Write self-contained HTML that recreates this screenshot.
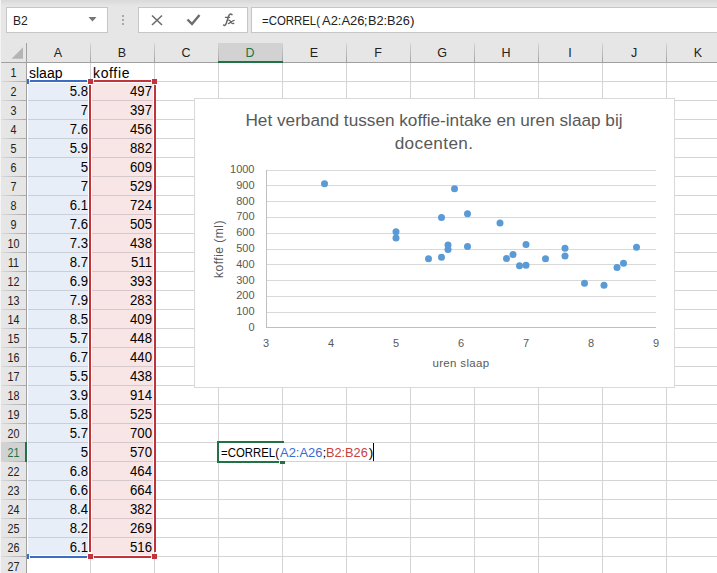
<!DOCTYPE html><html><head><meta charset="utf-8"><style>
*{margin:0;padding:0;box-sizing:border-box}
html,body{width:717px;height:573px;overflow:hidden;background:#e6e6e6;font-family:"Liberation Sans", sans-serif;position:relative}
.a{position:absolute}
.t{position:absolute;white-space:nowrap;line-height:1}
</style></head><body>

<div class="a" style="left:0;top:0;width:717px;height:6px;background:linear-gradient(#d9d9d9,#e6e6e6)"></div>
<div class="a" style="left:0;top:0;width:1px;height:573px;background:#f4f4f4"></div>
<div class="a" style="left:6px;top:7px;width:102px;height:26px;background:#fff;border:1px solid #c6c6c6"></div>
<div class="t" style="left:12.8px;top:14px;font-size:13px;color:#222;transform:scaleX(0.93);transform-origin:0 0">B2</div>
<svg class="a" style="left:0;top:0" width="717" height="43"><polygon points="88.5,17 96.5,17 92.5,21.5" fill="#757575"/><rect x="122" y="15" width="2" height="2" fill="#a8a8a8"/><rect x="122" y="19" width="2" height="2" fill="#a8a8a8"/><rect x="122" y="23" width="2" height="2" fill="#a8a8a8"/></svg>
<div class="a" style="left:138px;top:7px;width:110px;height:26px;background:#fff;border:1px solid #c6c6c6"></div>
<svg class="a" style="left:0;top:0" width="717" height="43"><path d="M152,15.5 L162,25 M162,15.5 L152,25" stroke="#6d6d6d" stroke-width="1.6" fill="none"/><path d="M187.5,19.5 L192,24 L199.5,15" stroke="#6d6d6d" stroke-width="2.4" fill="none"/></svg>
<svg class="a" style="left:215px;top:8px" width="30" height="24"><g fill="none" stroke="#666" stroke-linecap="round"><path d="M17,6.6 C15.6,5.6 14.2,6.2 13.6,8.2 L11.2,15.6 C10.6,17.4 9.4,17.8 8.6,17" stroke-width="1.5"/><path d="M10.4,9.4 L14.6,9.4" stroke-width="1.2"/><path d="M13.6,12.2 C15,11.8 16.2,14.6 17,15.4 C17.6,15.9 18.3,15.6 18.8,15.2 M19.2,12.3 C18,12 15,15.2 13.4,15.6" stroke-width="1.2"/></g></svg>
<div class="a" style="left:251px;top:7px;width:480px;height:26px;background:#fff;border:1px solid #c6c6c6"></div>
<div class="t" style="left:262.16px;top:14px;font-size:13.6px;color:#222;transform:scaleX(0.8382);transform-origin:0 0">=CORREL(</div>
<div class="t" style="left:321.70px;top:14px;font-size:13.6px;color:#222;transform:scaleX(0.9523);transform-origin:0 0">A2:A26</div>
<div class="t" style="left:363.80px;top:14px;font-size:13.6px;color:#222;transform:scaleX(1.0000);transform-origin:0 0">;</div>
<div class="t" style="left:367.66px;top:14px;font-size:13.6px;color:#222;transform:scaleX(0.9372);transform-origin:0 0">B2:B26</div>
<div class="t" style="left:410.00px;top:14px;font-size:13.6px;color:#222;transform:scaleX(1.0000);transform-origin:0 0">)</div>
<div class="a" style="left:1px;top:43px;width:716px;height:20px;background:#e6e6e6"></div>
<svg class="a" style="left:0;top:43px" width="26" height="19"><polygon points="11.5,15.7 23,15.7 23,4.2" fill="#b4b4b4"/></svg>
<div class="a" style="left:218px;top:43px;width:65px;height:19px;background:#d2d2d2"></div>
<div class="a" style="left:27px;top:63px;width:690px;height:510px;background:#fff"></div>
<div class="a" style="left:1px;top:63px;width:25px;height:510px;background:#e6e6e6"></div>
<div class="a" style="left:1px;top:442px;width:25px;height:19px;background:#d2d2d2"></div>
<div class="a" style="left:1px;top:62px;width:716px;height:1px;background:#a0a0a0"></div>
<div class="a" style="left:26px;top:43px;width:1px;height:530px;background:#a0a0a0"></div>
<div class="a" style="left:90px;top:43px;width:1px;height:19px;background:linear-gradient(#d4d4d4,#a4a4a4)"></div>
<div class="a" style="left:90px;top:63px;width:1px;height:510px;background:#d4d4d4"></div>
<div class="t" style="left:26px;top:47px;width:64px;text-align:center;font-size:12.5px;color:#222">A</div>
<div class="a" style="left:154px;top:43px;width:1px;height:19px;background:linear-gradient(#d4d4d4,#a4a4a4)"></div>
<div class="a" style="left:154px;top:63px;width:1px;height:510px;background:#d4d4d4"></div>
<div class="t" style="left:90px;top:47px;width:64px;text-align:center;font-size:12.5px;color:#222">B</div>
<div class="a" style="left:218px;top:43px;width:1px;height:19px;background:linear-gradient(#d4d4d4,#a4a4a4)"></div>
<div class="a" style="left:218px;top:63px;width:1px;height:510px;background:#d4d4d4"></div>
<div class="t" style="left:154px;top:47px;width:64px;text-align:center;font-size:12.5px;color:#222">C</div>
<div class="a" style="left:282px;top:43px;width:1px;height:19px;background:linear-gradient(#d4d4d4,#a4a4a4)"></div>
<div class="a" style="left:282px;top:63px;width:1px;height:510px;background:#d4d4d4"></div>
<div class="t" style="left:218px;top:47px;width:64px;text-align:center;font-size:12.5px;color:#217346">D</div>
<div class="a" style="left:346px;top:43px;width:1px;height:19px;background:linear-gradient(#d4d4d4,#a4a4a4)"></div>
<div class="a" style="left:346px;top:63px;width:1px;height:510px;background:#d4d4d4"></div>
<div class="t" style="left:282px;top:47px;width:64px;text-align:center;font-size:12.5px;color:#222">E</div>
<div class="a" style="left:410px;top:43px;width:1px;height:19px;background:linear-gradient(#d4d4d4,#a4a4a4)"></div>
<div class="a" style="left:410px;top:63px;width:1px;height:510px;background:#d4d4d4"></div>
<div class="t" style="left:346px;top:47px;width:64px;text-align:center;font-size:12.5px;color:#222">F</div>
<div class="a" style="left:474px;top:43px;width:1px;height:19px;background:linear-gradient(#d4d4d4,#a4a4a4)"></div>
<div class="a" style="left:474px;top:63px;width:1px;height:510px;background:#d4d4d4"></div>
<div class="t" style="left:410px;top:47px;width:64px;text-align:center;font-size:12.5px;color:#222">G</div>
<div class="a" style="left:538px;top:43px;width:1px;height:19px;background:linear-gradient(#d4d4d4,#a4a4a4)"></div>
<div class="a" style="left:538px;top:63px;width:1px;height:510px;background:#d4d4d4"></div>
<div class="t" style="left:474px;top:47px;width:64px;text-align:center;font-size:12.5px;color:#222">H</div>
<div class="a" style="left:602px;top:43px;width:1px;height:19px;background:linear-gradient(#d4d4d4,#a4a4a4)"></div>
<div class="a" style="left:602px;top:63px;width:1px;height:510px;background:#d4d4d4"></div>
<div class="t" style="left:538px;top:47px;width:64px;text-align:center;font-size:12.5px;color:#222">I</div>
<div class="a" style="left:666px;top:43px;width:1px;height:19px;background:linear-gradient(#d4d4d4,#a4a4a4)"></div>
<div class="a" style="left:666px;top:63px;width:1px;height:510px;background:#d4d4d4"></div>
<div class="t" style="left:602px;top:47px;width:64px;text-align:center;font-size:12.5px;color:#222">J</div>
<div class="a" style="left:730px;top:43px;width:1px;height:19px;background:linear-gradient(#d4d4d4,#a4a4a4)"></div>
<div class="a" style="left:730px;top:63px;width:1px;height:510px;background:#d4d4d4"></div>
<div class="t" style="left:666px;top:47px;width:64px;text-align:center;font-size:12.5px;color:#222">K</div>
<div class="a" style="left:1px;top:81px;width:25px;height:1px;background:linear-gradient(to right,#dadada,#a8a8a8)"></div>
<div class="a" style="left:27px;top:81px;width:690px;height:1px;background:#d4d4d4"></div>
<div class="t" style="left:1px;top:67px;width:25px;text-align:center;font-size:12.5px;color:#222;transform:scaleX(0.86)">1</div>
<div class="a" style="left:1px;top:100px;width:25px;height:1px;background:linear-gradient(to right,#dadada,#a8a8a8)"></div>
<div class="a" style="left:27px;top:100px;width:690px;height:1px;background:#d4d4d4"></div>
<div class="t" style="left:1px;top:86px;width:25px;text-align:center;font-size:12.5px;color:#222;transform:scaleX(0.86)">2</div>
<div class="a" style="left:1px;top:119px;width:25px;height:1px;background:linear-gradient(to right,#dadada,#a8a8a8)"></div>
<div class="a" style="left:27px;top:119px;width:690px;height:1px;background:#d4d4d4"></div>
<div class="t" style="left:1px;top:105px;width:25px;text-align:center;font-size:12.5px;color:#222;transform:scaleX(0.86)">3</div>
<div class="a" style="left:1px;top:138px;width:25px;height:1px;background:linear-gradient(to right,#dadada,#a8a8a8)"></div>
<div class="a" style="left:27px;top:138px;width:690px;height:1px;background:#d4d4d4"></div>
<div class="t" style="left:1px;top:124px;width:25px;text-align:center;font-size:12.5px;color:#222;transform:scaleX(0.86)">4</div>
<div class="a" style="left:1px;top:157px;width:25px;height:1px;background:linear-gradient(to right,#dadada,#a8a8a8)"></div>
<div class="a" style="left:27px;top:157px;width:690px;height:1px;background:#d4d4d4"></div>
<div class="t" style="left:1px;top:143px;width:25px;text-align:center;font-size:12.5px;color:#222;transform:scaleX(0.86)">5</div>
<div class="a" style="left:1px;top:176px;width:25px;height:1px;background:linear-gradient(to right,#dadada,#a8a8a8)"></div>
<div class="a" style="left:27px;top:176px;width:690px;height:1px;background:#d4d4d4"></div>
<div class="t" style="left:1px;top:162px;width:25px;text-align:center;font-size:12.5px;color:#222;transform:scaleX(0.86)">6</div>
<div class="a" style="left:1px;top:195px;width:25px;height:1px;background:linear-gradient(to right,#dadada,#a8a8a8)"></div>
<div class="a" style="left:27px;top:195px;width:690px;height:1px;background:#d4d4d4"></div>
<div class="t" style="left:1px;top:181px;width:25px;text-align:center;font-size:12.5px;color:#222;transform:scaleX(0.86)">7</div>
<div class="a" style="left:1px;top:214px;width:25px;height:1px;background:linear-gradient(to right,#dadada,#a8a8a8)"></div>
<div class="a" style="left:27px;top:214px;width:690px;height:1px;background:#d4d4d4"></div>
<div class="t" style="left:1px;top:200px;width:25px;text-align:center;font-size:12.5px;color:#222;transform:scaleX(0.86)">8</div>
<div class="a" style="left:1px;top:233px;width:25px;height:1px;background:linear-gradient(to right,#dadada,#a8a8a8)"></div>
<div class="a" style="left:27px;top:233px;width:690px;height:1px;background:#d4d4d4"></div>
<div class="t" style="left:1px;top:219px;width:25px;text-align:center;font-size:12.5px;color:#222;transform:scaleX(0.86)">9</div>
<div class="a" style="left:1px;top:252px;width:25px;height:1px;background:linear-gradient(to right,#dadada,#a8a8a8)"></div>
<div class="a" style="left:27px;top:252px;width:690px;height:1px;background:#d4d4d4"></div>
<div class="t" style="left:1px;top:238px;width:25px;text-align:center;font-size:12.5px;color:#222;transform:scaleX(0.86)">10</div>
<div class="a" style="left:1px;top:271px;width:25px;height:1px;background:linear-gradient(to right,#dadada,#a8a8a8)"></div>
<div class="a" style="left:27px;top:271px;width:690px;height:1px;background:#d4d4d4"></div>
<div class="t" style="left:1px;top:257px;width:25px;text-align:center;font-size:12.5px;color:#222;transform:scaleX(0.86)">11</div>
<div class="a" style="left:1px;top:290px;width:25px;height:1px;background:linear-gradient(to right,#dadada,#a8a8a8)"></div>
<div class="a" style="left:27px;top:290px;width:690px;height:1px;background:#d4d4d4"></div>
<div class="t" style="left:1px;top:276px;width:25px;text-align:center;font-size:12.5px;color:#222;transform:scaleX(0.86)">12</div>
<div class="a" style="left:1px;top:309px;width:25px;height:1px;background:linear-gradient(to right,#dadada,#a8a8a8)"></div>
<div class="a" style="left:27px;top:309px;width:690px;height:1px;background:#d4d4d4"></div>
<div class="t" style="left:1px;top:295px;width:25px;text-align:center;font-size:12.5px;color:#222;transform:scaleX(0.86)">13</div>
<div class="a" style="left:1px;top:328px;width:25px;height:1px;background:linear-gradient(to right,#dadada,#a8a8a8)"></div>
<div class="a" style="left:27px;top:328px;width:690px;height:1px;background:#d4d4d4"></div>
<div class="t" style="left:1px;top:314px;width:25px;text-align:center;font-size:12.5px;color:#222;transform:scaleX(0.86)">14</div>
<div class="a" style="left:1px;top:347px;width:25px;height:1px;background:linear-gradient(to right,#dadada,#a8a8a8)"></div>
<div class="a" style="left:27px;top:347px;width:690px;height:1px;background:#d4d4d4"></div>
<div class="t" style="left:1px;top:333px;width:25px;text-align:center;font-size:12.5px;color:#222;transform:scaleX(0.86)">15</div>
<div class="a" style="left:1px;top:366px;width:25px;height:1px;background:linear-gradient(to right,#dadada,#a8a8a8)"></div>
<div class="a" style="left:27px;top:366px;width:690px;height:1px;background:#d4d4d4"></div>
<div class="t" style="left:1px;top:352px;width:25px;text-align:center;font-size:12.5px;color:#222;transform:scaleX(0.86)">16</div>
<div class="a" style="left:1px;top:385px;width:25px;height:1px;background:linear-gradient(to right,#dadada,#a8a8a8)"></div>
<div class="a" style="left:27px;top:385px;width:690px;height:1px;background:#d4d4d4"></div>
<div class="t" style="left:1px;top:371px;width:25px;text-align:center;font-size:12.5px;color:#222;transform:scaleX(0.86)">17</div>
<div class="a" style="left:1px;top:404px;width:25px;height:1px;background:linear-gradient(to right,#dadada,#a8a8a8)"></div>
<div class="a" style="left:27px;top:404px;width:690px;height:1px;background:#d4d4d4"></div>
<div class="t" style="left:1px;top:390px;width:25px;text-align:center;font-size:12.5px;color:#222;transform:scaleX(0.86)">18</div>
<div class="a" style="left:1px;top:423px;width:25px;height:1px;background:linear-gradient(to right,#dadada,#a8a8a8)"></div>
<div class="a" style="left:27px;top:423px;width:690px;height:1px;background:#d4d4d4"></div>
<div class="t" style="left:1px;top:409px;width:25px;text-align:center;font-size:12.5px;color:#222;transform:scaleX(0.86)">19</div>
<div class="a" style="left:1px;top:442px;width:25px;height:1px;background:linear-gradient(to right,#dadada,#a8a8a8)"></div>
<div class="a" style="left:27px;top:442px;width:690px;height:1px;background:#d4d4d4"></div>
<div class="t" style="left:1px;top:428px;width:25px;text-align:center;font-size:12.5px;color:#222;transform:scaleX(0.86)">20</div>
<div class="a" style="left:1px;top:461px;width:25px;height:1px;background:linear-gradient(to right,#dadada,#a8a8a8)"></div>
<div class="a" style="left:27px;top:461px;width:690px;height:1px;background:#d4d4d4"></div>
<div class="t" style="left:1px;top:447px;width:25px;text-align:center;font-size:12.5px;color:#217346;transform:scaleX(0.86)">21</div>
<div class="a" style="left:1px;top:480px;width:25px;height:1px;background:linear-gradient(to right,#dadada,#a8a8a8)"></div>
<div class="a" style="left:27px;top:480px;width:690px;height:1px;background:#d4d4d4"></div>
<div class="t" style="left:1px;top:466px;width:25px;text-align:center;font-size:12.5px;color:#222;transform:scaleX(0.86)">22</div>
<div class="a" style="left:1px;top:499px;width:25px;height:1px;background:linear-gradient(to right,#dadada,#a8a8a8)"></div>
<div class="a" style="left:27px;top:499px;width:690px;height:1px;background:#d4d4d4"></div>
<div class="t" style="left:1px;top:485px;width:25px;text-align:center;font-size:12.5px;color:#222;transform:scaleX(0.86)">23</div>
<div class="a" style="left:1px;top:518px;width:25px;height:1px;background:linear-gradient(to right,#dadada,#a8a8a8)"></div>
<div class="a" style="left:27px;top:518px;width:690px;height:1px;background:#d4d4d4"></div>
<div class="t" style="left:1px;top:504px;width:25px;text-align:center;font-size:12.5px;color:#222;transform:scaleX(0.86)">24</div>
<div class="a" style="left:1px;top:537px;width:25px;height:1px;background:linear-gradient(to right,#dadada,#a8a8a8)"></div>
<div class="a" style="left:27px;top:537px;width:690px;height:1px;background:#d4d4d4"></div>
<div class="t" style="left:1px;top:523px;width:25px;text-align:center;font-size:12.5px;color:#222;transform:scaleX(0.86)">25</div>
<div class="a" style="left:1px;top:556px;width:25px;height:1px;background:linear-gradient(to right,#dadada,#a8a8a8)"></div>
<div class="a" style="left:27px;top:556px;width:690px;height:1px;background:#d4d4d4"></div>
<div class="t" style="left:1px;top:542px;width:25px;text-align:center;font-size:12.5px;color:#222;transform:scaleX(0.86)">26</div>
<div class="a" style="left:1px;top:575px;width:25px;height:1px;background:linear-gradient(to right,#dadada,#a8a8a8)"></div>
<div class="a" style="left:27px;top:575px;width:690px;height:1px;background:#d4d4d4"></div>
<div class="t" style="left:1px;top:561px;width:25px;text-align:center;font-size:12.5px;color:#222;transform:scaleX(0.86)">27</div>
<div class="a" style="left:25px;top:442px;width:2px;height:20px;background:#217346"></div>
<div class="a" style="left:218px;top:61px;width:65px;height:2px;background:#217346"></div>
<div class="a" style="left:27px;top:82px;width:1px;height:474px;background:#fff"></div>
<div class="a" style="left:88px;top:82px;width:4px;height:474px;background:#fff"></div>
<div class="a" style="left:153px;top:82px;width:1px;height:474px;background:#fff"></div>
<div class="a" style="left:28px;top:83px;width:60px;height:472px;background:#e8eef8"></div>
<div class="a" style="left:92px;top:83px;width:61px;height:472px;background:#f8e6e6"></div>
<div class="a" style="left:28px;top:100px;width:60px;height:1px;background:#c9ced8"></div>
<div class="a" style="left:92px;top:100px;width:61px;height:1px;background:#d6c8ca"></div>
<div class="a" style="left:28px;top:119px;width:60px;height:1px;background:#c9ced8"></div>
<div class="a" style="left:92px;top:119px;width:61px;height:1px;background:#d6c8ca"></div>
<div class="a" style="left:28px;top:138px;width:60px;height:1px;background:#c9ced8"></div>
<div class="a" style="left:92px;top:138px;width:61px;height:1px;background:#d6c8ca"></div>
<div class="a" style="left:28px;top:157px;width:60px;height:1px;background:#c9ced8"></div>
<div class="a" style="left:92px;top:157px;width:61px;height:1px;background:#d6c8ca"></div>
<div class="a" style="left:28px;top:176px;width:60px;height:1px;background:#c9ced8"></div>
<div class="a" style="left:92px;top:176px;width:61px;height:1px;background:#d6c8ca"></div>
<div class="a" style="left:28px;top:195px;width:60px;height:1px;background:#c9ced8"></div>
<div class="a" style="left:92px;top:195px;width:61px;height:1px;background:#d6c8ca"></div>
<div class="a" style="left:28px;top:214px;width:60px;height:1px;background:#c9ced8"></div>
<div class="a" style="left:92px;top:214px;width:61px;height:1px;background:#d6c8ca"></div>
<div class="a" style="left:28px;top:233px;width:60px;height:1px;background:#c9ced8"></div>
<div class="a" style="left:92px;top:233px;width:61px;height:1px;background:#d6c8ca"></div>
<div class="a" style="left:28px;top:252px;width:60px;height:1px;background:#c9ced8"></div>
<div class="a" style="left:92px;top:252px;width:61px;height:1px;background:#d6c8ca"></div>
<div class="a" style="left:28px;top:271px;width:60px;height:1px;background:#c9ced8"></div>
<div class="a" style="left:92px;top:271px;width:61px;height:1px;background:#d6c8ca"></div>
<div class="a" style="left:28px;top:290px;width:60px;height:1px;background:#c9ced8"></div>
<div class="a" style="left:92px;top:290px;width:61px;height:1px;background:#d6c8ca"></div>
<div class="a" style="left:28px;top:309px;width:60px;height:1px;background:#c9ced8"></div>
<div class="a" style="left:92px;top:309px;width:61px;height:1px;background:#d6c8ca"></div>
<div class="a" style="left:28px;top:328px;width:60px;height:1px;background:#c9ced8"></div>
<div class="a" style="left:92px;top:328px;width:61px;height:1px;background:#d6c8ca"></div>
<div class="a" style="left:28px;top:347px;width:60px;height:1px;background:#c9ced8"></div>
<div class="a" style="left:92px;top:347px;width:61px;height:1px;background:#d6c8ca"></div>
<div class="a" style="left:28px;top:366px;width:60px;height:1px;background:#c9ced8"></div>
<div class="a" style="left:92px;top:366px;width:61px;height:1px;background:#d6c8ca"></div>
<div class="a" style="left:28px;top:385px;width:60px;height:1px;background:#c9ced8"></div>
<div class="a" style="left:92px;top:385px;width:61px;height:1px;background:#d6c8ca"></div>
<div class="a" style="left:28px;top:404px;width:60px;height:1px;background:#c9ced8"></div>
<div class="a" style="left:92px;top:404px;width:61px;height:1px;background:#d6c8ca"></div>
<div class="a" style="left:28px;top:423px;width:60px;height:1px;background:#c9ced8"></div>
<div class="a" style="left:92px;top:423px;width:61px;height:1px;background:#d6c8ca"></div>
<div class="a" style="left:28px;top:442px;width:60px;height:1px;background:#c9ced8"></div>
<div class="a" style="left:92px;top:442px;width:61px;height:1px;background:#d6c8ca"></div>
<div class="a" style="left:28px;top:461px;width:60px;height:1px;background:#c9ced8"></div>
<div class="a" style="left:92px;top:461px;width:61px;height:1px;background:#d6c8ca"></div>
<div class="a" style="left:28px;top:480px;width:60px;height:1px;background:#c9ced8"></div>
<div class="a" style="left:92px;top:480px;width:61px;height:1px;background:#d6c8ca"></div>
<div class="a" style="left:28px;top:499px;width:60px;height:1px;background:#c9ced8"></div>
<div class="a" style="left:92px;top:499px;width:61px;height:1px;background:#d6c8ca"></div>
<div class="a" style="left:28px;top:518px;width:60px;height:1px;background:#c9ced8"></div>
<div class="a" style="left:92px;top:518px;width:61px;height:1px;background:#d6c8ca"></div>
<div class="a" style="left:28px;top:537px;width:60px;height:1px;background:#c9ced8"></div>
<div class="a" style="left:92px;top:537px;width:61px;height:1px;background:#d6c8ca"></div>
<div class="t" style="left:29px;top:66px;font-size:14px;color:#000">slaap</div>
<div class="t" style="left:93px;top:66px;font-size:14px;letter-spacing:0.65px;color:#000">koffie</div>
<div class="t" style="left:27px;top:84px;width:61px;text-align:right;font-size:14px;color:#000;transform:scaleX(0.94);transform-origin:100% 0">5.8</div>
<div class="t" style="left:91px;top:84px;width:61px;text-align:right;font-size:14px;color:#000;transform:scaleX(0.94);transform-origin:100% 0">497</div>
<div class="t" style="left:27px;top:103px;width:61px;text-align:right;font-size:14px;color:#000;transform:scaleX(0.94);transform-origin:100% 0">7</div>
<div class="t" style="left:91px;top:103px;width:61px;text-align:right;font-size:14px;color:#000;transform:scaleX(0.94);transform-origin:100% 0">397</div>
<div class="t" style="left:27px;top:122px;width:61px;text-align:right;font-size:14px;color:#000;transform:scaleX(0.94);transform-origin:100% 0">7.6</div>
<div class="t" style="left:91px;top:122px;width:61px;text-align:right;font-size:14px;color:#000;transform:scaleX(0.94);transform-origin:100% 0">456</div>
<div class="t" style="left:27px;top:141px;width:61px;text-align:right;font-size:14px;color:#000;transform:scaleX(0.94);transform-origin:100% 0">5.9</div>
<div class="t" style="left:91px;top:141px;width:61px;text-align:right;font-size:14px;color:#000;transform:scaleX(0.94);transform-origin:100% 0">882</div>
<div class="t" style="left:27px;top:160px;width:61px;text-align:right;font-size:14px;color:#000;transform:scaleX(0.94);transform-origin:100% 0">5</div>
<div class="t" style="left:91px;top:160px;width:61px;text-align:right;font-size:14px;color:#000;transform:scaleX(0.94);transform-origin:100% 0">609</div>
<div class="t" style="left:27px;top:179px;width:61px;text-align:right;font-size:14px;color:#000;transform:scaleX(0.94);transform-origin:100% 0">7</div>
<div class="t" style="left:91px;top:179px;width:61px;text-align:right;font-size:14px;color:#000;transform:scaleX(0.94);transform-origin:100% 0">529</div>
<div class="t" style="left:27px;top:198px;width:61px;text-align:right;font-size:14px;color:#000;transform:scaleX(0.94);transform-origin:100% 0">6.1</div>
<div class="t" style="left:91px;top:198px;width:61px;text-align:right;font-size:14px;color:#000;transform:scaleX(0.94);transform-origin:100% 0">724</div>
<div class="t" style="left:27px;top:217px;width:61px;text-align:right;font-size:14px;color:#000;transform:scaleX(0.94);transform-origin:100% 0">7.6</div>
<div class="t" style="left:91px;top:217px;width:61px;text-align:right;font-size:14px;color:#000;transform:scaleX(0.94);transform-origin:100% 0">505</div>
<div class="t" style="left:27px;top:236px;width:61px;text-align:right;font-size:14px;color:#000;transform:scaleX(0.94);transform-origin:100% 0">7.3</div>
<div class="t" style="left:91px;top:236px;width:61px;text-align:right;font-size:14px;color:#000;transform:scaleX(0.94);transform-origin:100% 0">438</div>
<div class="t" style="left:27px;top:255px;width:61px;text-align:right;font-size:14px;color:#000;transform:scaleX(0.94);transform-origin:100% 0">8.7</div>
<div class="t" style="left:91px;top:255px;width:61px;text-align:right;font-size:14px;color:#000;transform:scaleX(0.94);transform-origin:100% 0">511</div>
<div class="t" style="left:27px;top:274px;width:61px;text-align:right;font-size:14px;color:#000;transform:scaleX(0.94);transform-origin:100% 0">6.9</div>
<div class="t" style="left:91px;top:274px;width:61px;text-align:right;font-size:14px;color:#000;transform:scaleX(0.94);transform-origin:100% 0">393</div>
<div class="t" style="left:27px;top:293px;width:61px;text-align:right;font-size:14px;color:#000;transform:scaleX(0.94);transform-origin:100% 0">7.9</div>
<div class="t" style="left:91px;top:293px;width:61px;text-align:right;font-size:14px;color:#000;transform:scaleX(0.94);transform-origin:100% 0">283</div>
<div class="t" style="left:27px;top:312px;width:61px;text-align:right;font-size:14px;color:#000;transform:scaleX(0.94);transform-origin:100% 0">8.5</div>
<div class="t" style="left:91px;top:312px;width:61px;text-align:right;font-size:14px;color:#000;transform:scaleX(0.94);transform-origin:100% 0">409</div>
<div class="t" style="left:27px;top:331px;width:61px;text-align:right;font-size:14px;color:#000;transform:scaleX(0.94);transform-origin:100% 0">5.7</div>
<div class="t" style="left:91px;top:331px;width:61px;text-align:right;font-size:14px;color:#000;transform:scaleX(0.94);transform-origin:100% 0">448</div>
<div class="t" style="left:27px;top:350px;width:61px;text-align:right;font-size:14px;color:#000;transform:scaleX(0.94);transform-origin:100% 0">6.7</div>
<div class="t" style="left:91px;top:350px;width:61px;text-align:right;font-size:14px;color:#000;transform:scaleX(0.94);transform-origin:100% 0">440</div>
<div class="t" style="left:27px;top:369px;width:61px;text-align:right;font-size:14px;color:#000;transform:scaleX(0.94);transform-origin:100% 0">5.5</div>
<div class="t" style="left:91px;top:369px;width:61px;text-align:right;font-size:14px;color:#000;transform:scaleX(0.94);transform-origin:100% 0">438</div>
<div class="t" style="left:27px;top:388px;width:61px;text-align:right;font-size:14px;color:#000;transform:scaleX(0.94);transform-origin:100% 0">3.9</div>
<div class="t" style="left:91px;top:388px;width:61px;text-align:right;font-size:14px;color:#000;transform:scaleX(0.94);transform-origin:100% 0">914</div>
<div class="t" style="left:27px;top:407px;width:61px;text-align:right;font-size:14px;color:#000;transform:scaleX(0.94);transform-origin:100% 0">5.8</div>
<div class="t" style="left:91px;top:407px;width:61px;text-align:right;font-size:14px;color:#000;transform:scaleX(0.94);transform-origin:100% 0">525</div>
<div class="t" style="left:27px;top:426px;width:61px;text-align:right;font-size:14px;color:#000;transform:scaleX(0.94);transform-origin:100% 0">5.7</div>
<div class="t" style="left:91px;top:426px;width:61px;text-align:right;font-size:14px;color:#000;transform:scaleX(0.94);transform-origin:100% 0">700</div>
<div class="t" style="left:27px;top:445px;width:61px;text-align:right;font-size:14px;color:#000;transform:scaleX(0.94);transform-origin:100% 0">5</div>
<div class="t" style="left:91px;top:445px;width:61px;text-align:right;font-size:14px;color:#000;transform:scaleX(0.94);transform-origin:100% 0">570</div>
<div class="t" style="left:27px;top:464px;width:61px;text-align:right;font-size:14px;color:#000;transform:scaleX(0.94);transform-origin:100% 0">6.8</div>
<div class="t" style="left:91px;top:464px;width:61px;text-align:right;font-size:14px;color:#000;transform:scaleX(0.94);transform-origin:100% 0">464</div>
<div class="t" style="left:27px;top:483px;width:61px;text-align:right;font-size:14px;color:#000;transform:scaleX(0.94);transform-origin:100% 0">6.6</div>
<div class="t" style="left:91px;top:483px;width:61px;text-align:right;font-size:14px;color:#000;transform:scaleX(0.94);transform-origin:100% 0">664</div>
<div class="t" style="left:27px;top:502px;width:61px;text-align:right;font-size:14px;color:#000;transform:scaleX(0.94);transform-origin:100% 0">8.4</div>
<div class="t" style="left:91px;top:502px;width:61px;text-align:right;font-size:14px;color:#000;transform:scaleX(0.94);transform-origin:100% 0">382</div>
<div class="t" style="left:27px;top:521px;width:61px;text-align:right;font-size:14px;color:#000;transform:scaleX(0.94);transform-origin:100% 0">8.2</div>
<div class="t" style="left:91px;top:521px;width:61px;text-align:right;font-size:14px;color:#000;transform:scaleX(0.94);transform-origin:100% 0">269</div>
<div class="t" style="left:27px;top:540px;width:61px;text-align:right;font-size:14px;color:#000;transform:scaleX(0.94);transform-origin:100% 0">6.1</div>
<div class="t" style="left:91px;top:540px;width:61px;text-align:right;font-size:14px;color:#000;transform:scaleX(0.94);transform-origin:100% 0">516</div>
<div class="a" style="left:30px;top:80px;width:57px;height:2px;background:#3b6cc4"></div>
<div class="a" style="left:30px;top:556px;width:57px;height:2px;background:#3b6cc4"></div>
<div class="a" style="left:27px;top:79px;width:2px;height:5px;background:#3b6cc4"></div>
<div class="a" style="left:27px;top:554px;width:2px;height:5px;background:#3b6cc4"></div>
<div class="a" style="left:94px;top:80px;width:57px;height:2px;background:#c0343c"></div>
<div class="a" style="left:94px;top:556px;width:57px;height:2px;background:#c0343c"></div>
<div class="a" style="left:89px;top:85px;width:2px;height:467px;background:#c0343c"></div>
<div class="a" style="left:154px;top:85px;width:2px;height:467px;background:#c0343c"></div>
<div class="a" style="left:88px;top:79px;width:5px;height:5px;background:#c0343c"></div>
<div class="a" style="left:152px;top:79px;width:5px;height:5px;background:#c0343c"></div>
<div class="a" style="left:88px;top:554px;width:5px;height:5px;background:#c0343c"></div>
<div class="a" style="left:152px;top:554px;width:5px;height:5px;background:#c0343c"></div>
<div class="a" style="left:194px;top:98px;width:481px;height:290px;background:#fff;border:1px solid #d9d9d9"></div>
<svg class="a" style="left:0;top:0" width="717" height="573" font-family='"Liberation Sans", sans-serif'><line x1="266" y1="327.5" x2="656" y2="327.5" stroke="#bfbfbf" stroke-width="1"/><text x="254.5" y="331" text-anchor="end" font-size="11" fill="#595959">0</text><line x1="266" y1="312.5" x2="656" y2="312.5" stroke="#d9d9d9" stroke-width="1"/><text x="254.5" y="315" text-anchor="end" font-size="11" fill="#595959">100</text><line x1="266" y1="296.5" x2="656" y2="296.5" stroke="#d9d9d9" stroke-width="1"/><text x="254.5" y="299" text-anchor="end" font-size="11" fill="#595959">200</text><line x1="266" y1="280.5" x2="656" y2="280.5" stroke="#d9d9d9" stroke-width="1"/><text x="254.5" y="284" text-anchor="end" font-size="11" fill="#595959">300</text><line x1="266" y1="264.5" x2="656" y2="264.5" stroke="#d9d9d9" stroke-width="1"/><text x="254.5" y="268" text-anchor="end" font-size="11" fill="#595959">400</text><line x1="266" y1="249.5" x2="656" y2="249.5" stroke="#d9d9d9" stroke-width="1"/><text x="254.5" y="252" text-anchor="end" font-size="11" fill="#595959">500</text><line x1="266" y1="233.5" x2="656" y2="233.5" stroke="#d9d9d9" stroke-width="1"/><text x="254.5" y="236" text-anchor="end" font-size="11" fill="#595959">600</text><line x1="266" y1="217.5" x2="656" y2="217.5" stroke="#d9d9d9" stroke-width="1"/><text x="254.5" y="220" text-anchor="end" font-size="11" fill="#595959">700</text><line x1="266" y1="201.5" x2="656" y2="201.5" stroke="#d9d9d9" stroke-width="1"/><text x="254.5" y="205" text-anchor="end" font-size="11" fill="#595959">800</text><line x1="266" y1="185.5" x2="656" y2="185.5" stroke="#d9d9d9" stroke-width="1"/><text x="254.5" y="189" text-anchor="end" font-size="11" fill="#595959">900</text><line x1="266" y1="170.5" x2="656" y2="170.5" stroke="#d9d9d9" stroke-width="1"/><text x="254.5" y="173" text-anchor="end" font-size="11" fill="#595959">1000</text><line x1="266.5" y1="170" x2="266.5" y2="328" stroke="#bfbfbf" stroke-width="1"/><text x="266" y="347" text-anchor="middle" font-size="11" fill="#595959">3</text><text x="331" y="347" text-anchor="middle" font-size="11" fill="#595959">4</text><text x="396" y="347" text-anchor="middle" font-size="11" fill="#595959">5</text><text x="461" y="347" text-anchor="middle" font-size="11" fill="#595959">6</text><text x="526" y="347" text-anchor="middle" font-size="11" fill="#595959">7</text><text x="591" y="347" text-anchor="middle" font-size="11" fill="#595959">8</text><text x="656" y="347" text-anchor="middle" font-size="11" fill="#595959">9</text><circle cx="448.00" cy="249.42" r="3.5" fill="#5b9bd5"/><circle cx="526.00" cy="265.17" r="3.5" fill="#5b9bd5"/><circle cx="565.00" cy="255.88" r="3.5" fill="#5b9bd5"/><circle cx="454.50" cy="188.78" r="3.5" fill="#5b9bd5"/><circle cx="396.00" cy="231.78" r="3.5" fill="#5b9bd5"/><circle cx="526.00" cy="244.38" r="3.5" fill="#5b9bd5"/><circle cx="467.50" cy="213.67" r="3.5" fill="#5b9bd5"/><circle cx="565.00" cy="248.16" r="3.5" fill="#5b9bd5"/><circle cx="545.50" cy="258.71" r="3.5" fill="#5b9bd5"/><circle cx="636.50" cy="247.22" r="3.5" fill="#5b9bd5"/><circle cx="519.50" cy="265.80" r="3.5" fill="#5b9bd5"/><circle cx="584.50" cy="283.13" r="3.5" fill="#5b9bd5"/><circle cx="623.50" cy="263.28" r="3.5" fill="#5b9bd5"/><circle cx="441.50" cy="257.14" r="3.5" fill="#5b9bd5"/><circle cx="506.50" cy="258.40" r="3.5" fill="#5b9bd5"/><circle cx="428.50" cy="258.71" r="3.5" fill="#5b9bd5"/><circle cx="324.50" cy="183.74" r="3.5" fill="#5b9bd5"/><circle cx="448.00" cy="245.01" r="3.5" fill="#5b9bd5"/><circle cx="441.50" cy="217.45" r="3.5" fill="#5b9bd5"/><circle cx="396.00" cy="237.92" r="3.5" fill="#5b9bd5"/><circle cx="513.00" cy="254.62" r="3.5" fill="#5b9bd5"/><circle cx="500.00" cy="223.12" r="3.5" fill="#5b9bd5"/><circle cx="617.00" cy="267.53" r="3.5" fill="#5b9bd5"/><circle cx="604.00" cy="285.33" r="3.5" fill="#5b9bd5"/><circle cx="467.50" cy="246.43" r="3.5" fill="#5b9bd5"/><text x="434" y="126" text-anchor="middle" font-size="17.2" fill="#595959">Het verband tussen koffie-intake en uren slaap bij</text><text x="434" y="149" text-anchor="middle" font-size="17.2" letter-spacing="0.35" fill="#595959">docenten.</text><text x="461" y="367" text-anchor="middle" font-size="11.5" letter-spacing="0.35" fill="#595959">uren slaap</text><text transform="translate(223,249) rotate(-90)" text-anchor="middle" font-size="12" letter-spacing="0.5" fill="#595959">koffie (ml)</text></svg>
<div class="a" style="left:219px;top:443px;width:155px;height:18px;background:#fff"></div>
<div class="a" style="left:217px;top:441px;width:67px;height:2px;background:#217346"></div>
<div class="a" style="left:217px;top:461px;width:62px;height:2px;background:#217346"></div>
<div class="a" style="left:217px;top:441px;width:2px;height:22px;background:#217346"></div>
<div class="a" style="left:280px;top:461px;width:5px;height:3px;background:#217346"></div>
<div class="t" style="left:220.86px;top:446px;font-size:13.6px;color:#000;transform:scaleX(0.8382);transform-origin:0 0">=CORREL(</div>
<div class="t" style="left:280.40px;top:446px;font-size:13.6px;color:#3a6bd0;transform:scaleX(0.9523);transform-origin:0 0">A2:A26</div>
<div class="t" style="left:322.50px;top:446px;font-size:13.6px;color:#000;transform:scaleX(1.0000);transform-origin:0 0">;</div>
<div class="t" style="left:326.36px;top:446px;font-size:13.6px;color:#c8423c;transform:scaleX(0.9372);transform-origin:0 0">B2:B26</div>
<div class="t" style="left:368.70px;top:446px;font-size:13.6px;color:#000;transform:scaleX(1.0000);transform-origin:0 0">)</div>
<div class="a" style="left:373px;top:443px;width:1px;height:18px;background:#000"></div>
</body></html>
